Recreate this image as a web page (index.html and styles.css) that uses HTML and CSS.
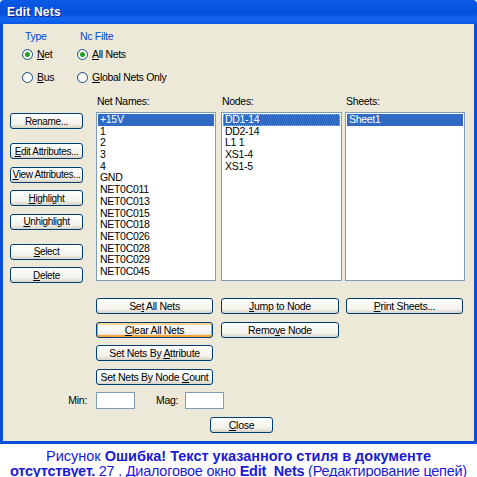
FILE: index.html
```html
<!DOCTYPE html>
<html lang="ru">
<head>
<meta charset="UTF-8" />
<title>Edit Nets</title>
<link rel="stylesheet" href="styles.css">
</head>
<body>

<div class="window">
  <div class="titlebar"><span class="title">Edit Nets</span></div>

  <div class="client">
    <!-- Type / Net Filter -->
    <div class="filters">
      <div class="group">
        <div class="group-label">Type</div>
        <div class="radio"><span class="dot checked"></span><span><u>N</u>et</span></div>
        <div class="radio"><span class="dot"></span><span><u>B</u>us</span></div>
      </div>
      <div class="group">
        <div class="group-label">Nc Filte</div>
        <div class="radio"><span class="dot checked"></span><span><u>A</u>ll Nets</span></div>
        <div class="radio"><span class="dot"></span><span><u>G</u>lobal Nets Only</span></div>
      </div>
    </div>

    <!-- Buttons + lists -->
    <div class="panes">
      <div class="side-buttons">
        <button class="btn">Rename...</button>
        <button class="btn spaced"><u>E</u>dit Attributes...</button>
        <button class="btn"><u>V</u>iew Attributes...</button>
        <button class="btn"><u>H</u>ighlight</button>
        <button class="btn"><u>U</u>nhighlight</button>
        <button class="btn spaced"><u>S</u>elect</button>
        <button class="btn"><u>D</u>elete</button>
      </div>
      <div class="pane">
        <div class="pane-label">Net Names:</div>
        <ul class="list w118">
          <li class="selected">+15V</li>
          <li>1</li>
          <li>2</li>
          <li>3</li>
          <li>4</li>
          <li>GND</li>
          <li>NET0C011</li>
          <li>NET0C013</li>
          <li>NET0C015</li>
          <li>NET0C018</li>
          <li>NET0C026</li>
          <li>NET0C028</li>
          <li>NET0C029</li>
          <li>NET0C045</li>
        </ul>
      </div>
      <div class="pane">
        <div class="pane-label">Nodes:</div>
        <ul class="list w119">
          <li class="selected focused">DD1-14</li>
          <li>DD2-14</li>
          <li>L1 1</li>
          <li>XS1-4</li>
          <li>XS1-5</li>
        </ul>
      </div>
      <div class="pane">
        <div class="pane-label">Sheets:</div>
        <ul class="list w118">
          <li class="selected">Sheet1</li>
        </ul>
      </div>
    </div>

    <!-- Action buttons -->
    <div class="actions">
      <button class="btn wide">Se<u>t</u> All Nets</button>
      <button class="btn wide mid"><u>J</u>ump to Node</button>
      <button class="btn wide last"><u>P</u>rint Sheets...</button>
      <button class="btn wide hot"><u>C</u>lear All Nets</button>
      <button class="btn wide mid">Remo<u>v</u>e Node</button>
      <button class="btn wide">Set Nets By <u>A</u>ttribute</button>
      <button class="btn wide">Set Nets By Node <u>C</u>ount</button>
    </div>

    <div class="range">
      <span class="range-label">Min:</span>
      <div class="range-fields">
        <span class="field"></span>
        <span class="range-label max">Mag:</span>
        <span class="field"></span>
      </div>
    </div>

    <div class="close-row">
      <button class="btn close"><u>C</u>lose</button>
    </div>
  </div>
</div>

<div class="caption">
  <div class="line">Рисунок&nbsp;<b>Ошибка! Текст указанного стиля в документе</b></div>
  <div class="line second"><b>отсутствует.</b>&nbsp;27 . Диалоговое окно&nbsp;<b>Edit_Nets</b>&nbsp;(Редактирование цепей)</div>
</div>

</body>
</html>
```

FILE: styles.css
```css
body {
  margin: 0;
  width: 477px;
  height: 477px;
  overflow: hidden;
  background: #fff;
  font-family: "Liberation Sans", Arial, sans-serif;
}
.window {
  width: 477px;
  height: 444px;
  display: flex;
  flex-direction: column;
}
.titlebar {
  height: 24px;
  flex: none;
  display: flex;
  align-items: center;
  padding-left: 7px;
  background: linear-gradient(#0b5be6, #0450dc 55%, #1466f0 78%, #0a58e4);
  border-radius: 4px 4px 0 0;
}
.title {
  color: #fff;
  font-weight: 700;
  font-size: 12px;
  letter-spacing: 0.2px;
  text-shadow: 1px 1px #0a1e8a;
}
.client {
  flex: 1;
  background: #ece9d8;
  border: 3px solid #0b4fd8;
  border-top: 0;
  padding: 6px 0 0 7px;
  font-size: 10.5px;
  letter-spacing: -0.3px;
  color: #000;
}

/* filter groups */
.filters {
  height: 66px;
  display: flex;
  padding-left: 12px;
}
.group {
  width: 55px;
  display: flex;
  flex-direction: column;
}
.group-label {
  color: #0046d5;
  height: 12px;
  line-height: 12px;
  padding-left: 3px;
}
.radio {
  display: flex;
  align-items: center;
  gap: 4px;
  height: 12px;
  margin-top: 6px;
  white-space: nowrap;
}
.radio + .radio {
  margin-top: 11px;
}
.dot {
  width: 9px;
  height: 9px;
  border: 1px solid #1c5180;
  border-radius: 50%;
  background: radial-gradient(circle at 60% 60%, #fff 35%, #dcd8c8);
  position: relative;
  flex: none;
}
.dot.checked::after {
  content: "";
  position: absolute;
  left: 2px;
  top: 2px;
  width: 5px;
  height: 5px;
  border-radius: 50%;
  background: #21a121;
}

/* buttons + lists */
.panes {
  display: grid;
  grid-template-columns: 86px 125px 124px 118px;
}
.side-buttons {
  display: flex;
  flex-direction: column;
  gap: 7.5px;
  padding-top: 17px;
}
.btn {
  height: 16px;
  width: 73px;
  padding: 0;
  border: 1px solid #003c74;
  border-radius: 3px;
  background: linear-gradient(#fff, #f3f2ec 70%, #d8d3c6);
  font-family: inherit;
  font-size: 10.5px;
  letter-spacing: -0.3px;
  color: #000;
  white-space: nowrap;
  overflow: hidden;
}
.side-buttons .btn {
  font-size: 10px;
  letter-spacing: -0.35px;
}
.btn.spaced {
  margin-top: 6.5px;
}
.btn u {
  text-decoration: underline;
}
.pane {
  display: flex;
  flex-direction: column;
}
.pane-label {
  height: 16px;
  line-height: 11px;
  padding-left: 1px;
}
.list {
  margin: 0;
  padding: 1px 1px 0;
  list-style: none;
  height: 166px;
  border: 1px solid #7f9db9;
  background: #fff;
  overflow: hidden;
}
.w118 { width: 116px; }
.w119 { width: 117px; }
.list li {
  height: 11.7px;
  line-height: 11.7px;
  padding-left: 2px;
  white-space: nowrap;
}
.list li.selected {
  background: #316ac5;
  color: #fff;
}
.list li.focused {
  outline: 1px dotted #f0b040;
  outline-offset: -1px;
}

/* bottom actions */
.actions {
  display: grid;
  grid-template-columns: 125px 124px 118px;
  grid-auto-rows: 16px;
  row-gap: 7.5px;
  margin: 15px 0 0 86px;
}
.btn.wide {
  width: 117px;
  grid-column: 1;
}
.btn.wide.mid {
  grid-column: 2;
  width: 118px;
}
.btn.wide.last {
  grid-column: 3;
  margin-left: 1px;
}
.btn.hot {
  border-color: #003c74;
  box-shadow: inset 0 -1px 0 1px #f5a638, inset 0 1px 0 1px #fbd891;
}

.range {
  display: grid;
  grid-template-columns: 86px auto;
  margin-top: 7px;
  height: 17px;
  align-items: center;
}
.range-label {
  color: #000;
}
.range > .range-label {
  text-align: right;
  padding-right: 9px;
}
.range-fields {
  display: flex;
  align-items: center;
}
.field {
  width: 37px;
  height: 15px;
  border: 1px solid #7f9db9;
  background: #fff;
}
.range-label.max {
  margin: 0 7px 0 21px;
}

.close-row {
  margin-top: 8px;
  padding-left: 200px;
}
.btn.close {
  width: 63px;
}

/* figure caption */
.caption {
  color: #1a1ad6;
  font-size: 14.5px;
  line-height: 15px;
  padding-top: 5px;
}
.caption .line {
  display: flex;
  justify-content: center;
  white-space: nowrap;
}
.caption .line.second {
  letter-spacing: -0.25px;
}
```
